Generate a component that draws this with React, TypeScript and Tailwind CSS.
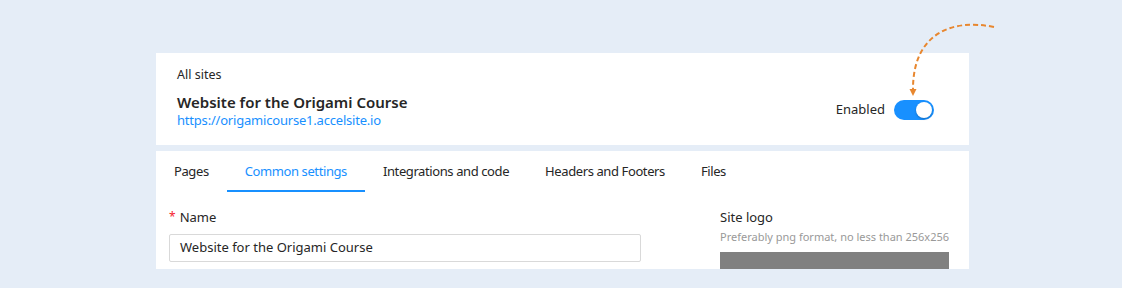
import React from 'react';

const tabs = ['Pages', 'Common settings', 'Integrations and code', 'Headers and Footers', 'Files'];

const App: React.FC = () => {
  return (
    <div
      className="relative w-[1122px] h-[288px] bg-[#e5edf7] overflow-hidden text-[#262626]"
      style={{ fontFamily: '"Noto Sans", "Open Sans", sans-serif' }}
    >
      {/* Arrow pointing at toggle */}
      <svg className="absolute left-0 top-0 pointer-events-none" width="1122" height="288">
        <path
          d="M994 27 C 950 18, 913 35, 913 89"
          fill="none"
          stroke="#e8872f"
          strokeWidth="2"
          strokeDasharray="5 3"
        />
        <path d="M909.5 89 L916.5 89 L913 96 Z" fill="#e8872f" />
      </svg>

      <div className="pt-[53px] pl-[156px] w-[969px] flex flex-col gap-[6px]">
        {/* Site header card */}
        <div className="bg-white h-[92px] pl-[21px] pr-[35px] flex items-end pb-[16px] justify-between">
          <div className="flex flex-col">
            <span className="text-[12.5px] leading-[18px] mb-[8px]">All sites</span>
            <span className="text-[15px] font-semibold leading-[20px]">Website for the Origami Course</span>
            <a className="text-[13px] leading-[17px] text-[#1890ff] tracking-[-0.2px]">
              https://origamicourse1.accelsite.io
            </a>
          </div>
          <div className="flex items-center gap-[9px] mb-[9px]">
            <span className="text-[13px]">Enabled</span>
            <div className="w-[40px] h-[20px] rounded-full bg-[#1890ff] flex items-center justify-end pr-[2px]">
              <div className="w-[16px] h-[16px] rounded-full bg-white shadow-[0_1px_2px_rgba(0,0,0,0.25)]" />
            </div>
          </div>
        </div>

        {/* Settings card */}
        <div className="bg-white h-[118px] overflow-hidden">
          <div className="flex h-[41px]">
            {tabs.map((t, i) => (
              <div
                key={t}
                className={`px-[18px] pt-[3px] flex items-center text-[13px] tracking-[-0.4px] border-b-2 ${
                  i === 1 ? 'text-[#1890ff] border-[#1890ff]' : 'border-transparent'
                }`}
              >
                {t}
              </div>
            ))}
          </div>
          <div className="flex pl-[13px] pt-[15px]">
            <div className="w-[472px] flex flex-col">
              <div className="text-[13px] leading-[20px] flex items-center">
                <span className="text-[#f5222d] mr-[4px] text-[12px]">*</span>
                <span>Name</span>
              </div>
              <div className="mt-[7px] h-[28px] border border-[#d9d9d9] rounded-[2px] flex items-center px-[10px] text-[13px]">
                Website for the Origami Course
              </div>
            </div>
            <div className="ml-[79px] w-[229px] flex flex-col">
              <span className="text-[13px] leading-[20px]">Site logo</span>
              <span className="text-[11px] leading-[16px] text-[#999] mt-[2px] whitespace-nowrap">
                Preferably png format, no less than 256x256
              </span>
              <div className="mt-[7px] h-[30px] bg-[#808080]" />
            </div>
          </div>
        </div>
      </div>
    </div>
  );
};

export default App;
